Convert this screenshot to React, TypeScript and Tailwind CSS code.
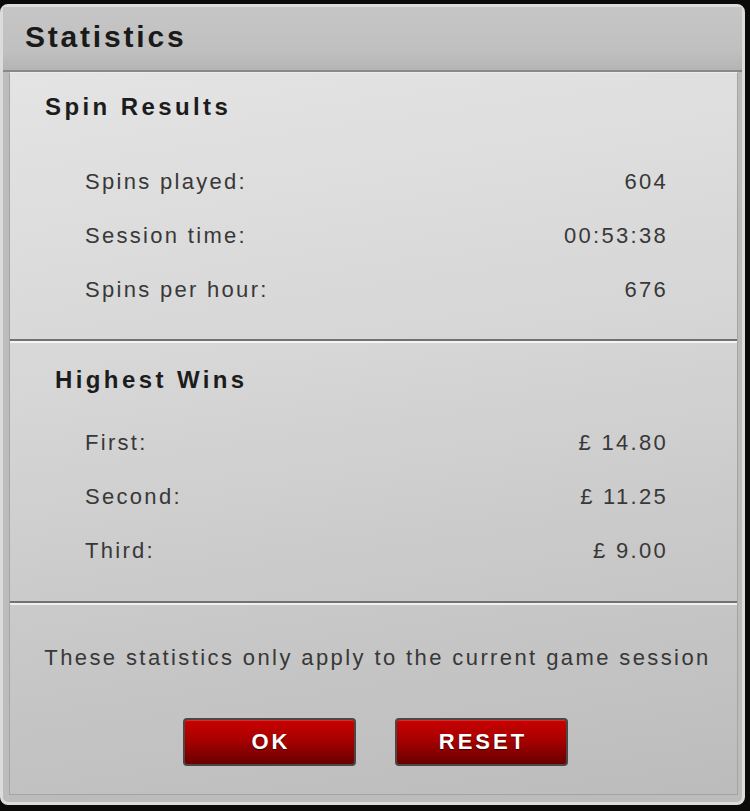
import React from "react";

const font = { fontFamily: '"Liberation Sans", Arial, Helvetica, sans-serif' };

function Row({ label, value }: { label: string; value: string }) {
  return (
    <div className="flex h-[54px] items-center justify-between pl-[75px] pr-[69px] text-[22px] leading-none tracking-[2.3px] text-[#383838]">
      <span>{label}</span>
      <span>{value}</span>
    </div>
  );
}

function Btn({ label }: { label: string }) {
  return (
    <button className="flex h-[48px] w-[173px] items-center justify-center rounded-[4px] border-2 border-[#4e4545] bg-[linear-gradient(180deg,#c80202_0%,#a80000_45%,#6a0000_100%)] pl-[3px] text-[22px] font-bold leading-none tracking-[3px] text-white shadow-[inset_0_1px_0_rgba(255,120,120,0.35)] [text-shadow:0_1px_1px_rgba(0,0,0,0.6)]">
      {label}
    </button>
  );
}

export default function App() {
  return (
    <div className="h-[811px] w-[750px] overflow-hidden bg-[#0b0a08] pt-[4px]" style={font}>
      <div className="flex h-[801px] w-[745px] flex-col rounded-[8px] border-[3px] border-[#dcdcdc] bg-[#bcbcbc]">
        <div className="flex h-[65px] shrink-0 items-center border-b-2 border-[#888888] bg-[linear-gradient(180deg,#c6c6c6_0%,#c0c0c0_70%,#b4b4b4_100%)] pb-[4px] pl-[22px]">
          <h1 className="text-[30px] font-bold leading-none tracking-[2.8px] text-[#1a1a1a]">Statistics</h1>
        </div>
        <div className="ml-[6px] mr-[4px] flex flex-1 flex-col border-x border-b border-x-[#a4a4a4] border-b-[#a4a4a4] border-t border-t-[#ececec] bg-[linear-gradient(172deg,#e4e4e4_0%,#d6d6d6_40%,#c8c8c8_70%,#bcbcbc_100%)]">
          <div className="flex h-[268px] shrink-0 flex-col border-b-2 border-[#727272] pt-[19px]">
            <h2 className="pl-[35px] text-[24px] font-bold leading-[30px] tracking-[3.4px] text-[#1c1c1c]">Spin Results</h2>
            <div className="mt-[33px] flex flex-col">
              <Row label="Spins played:" value="604" />
              <Row label="Session time:" value="00:53:38" />
              <Row label="Spins per hour:" value="676" />
            </div>
          </div>
          <div className="flex h-[262px] shrink-0 flex-col border-b-2 border-t-2 border-b-[#727272] border-t-[#f4f4f4] pt-[22px]">
            <h2 className="pl-[45px] text-[24px] font-bold leading-[30px] tracking-[3.4px] text-[#1c1c1c]">Highest Wins</h2>
            <div className="mt-[21px] flex flex-col">
              <Row label="First:" value="£ 14.80" />
              <Row label="Second:" value="£ 11.25" />
              <Row label="Third:" value="£ 9.00" />
            </div>
          </div>
          <div className="flex flex-1 flex-col items-center border-t-2 border-[#f0f0f0] pt-[38px]">
            <p className="pl-[8px] text-[22px] leading-[30px] tracking-[2.4px] text-[#383838]">
              These statistics only apply to the current game session
            </p>
            <div className="mt-[45px] flex gap-[39px] pl-[4px]">
              <Btn label="OK" />
              <Btn label="RESET" />
            </div>
          </div>
        </div>
        <div className="h-[7px] shrink-0" />
      </div>
    </div>
  );
}
